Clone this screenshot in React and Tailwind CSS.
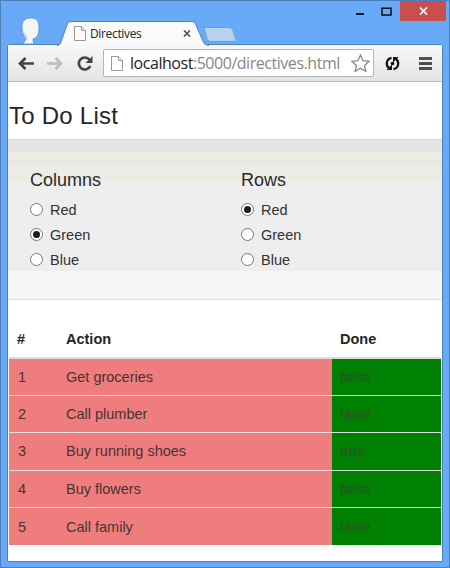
import React from 'react';

const items = [
  ['Get groceries', 'false'],
  ['Call plumber', 'false'],
  ['Buy running shoes', 'true'],
  ['Buy flowers', 'false'],
  ['Call family', 'false'],
];

function PageIcon({ className }) {
  return (
    <svg className={className} viewBox="0 0 12 15" fill="#fff" stroke="#999" strokeWidth="1">
      <path d="M.5.5h7l4 4v10H.5z" />
      <path d="M7.5.5v4h4" fill="#e8e8e8" />
    </svg>
  );
}

function TitleBar() {
  return (
    <div className="relative flex h-11 shrink-0 items-start">
      <svg className="ml-[19px] mt-[16px] h-[28px] w-[23px] shrink-0" viewBox="0 0 23 28">
        <path
          d="M11 1C5 1 2 4 2 9c0 4 0 6 2 9 1 1 2 2 2 4l-3 5h11l-1-3 0-2c4-1 6-5 6-10 0-8-2-11-8-11z"
          fill="#f4f6f8"
          stroke="#5a8cc4"
          strokeWidth=".8"
        />
        <path d="M3.500 8c-1 6 1 9 4 12l-.5 4c-1-2-3.500-6-3.500-10z" fill="#ccd5de" />
      </svg>
      <div className="relative ml-[14px] mt-[20px] flex h-[25px] w-[152px] shrink-0 items-center">
        <svg className="absolute inset-0 h-[25px] w-[152px]" viewBox="0 0 152 25">
          <path
            d="M0 24.5C4 24 4 21 5 18L10 4C11 1 12 .5 15 .5H134C137 .5 138 1 139 4L145 18C147 23 148 24.500 152 24.500"
            fill="#fafafa"
            stroke="#4b82c0"
          />
          <path d="M2 24.500H150" stroke="#f8f8f8" />
        </svg>
        <PageIcon className="relative ml-[17px] h-[15px] w-[12px]" />
        <span className="relative ml-[4px] mt-px w-[93px] font-['Open_Sans','Noto_Sans',sans-serif] text-[12px] tracking-[-0.35px] leading-4 text-[#222]">
          Directives
        </span>
        <svg className="relative h-[7px] w-[8px]" viewBox="0 0 8 7" stroke="#555" strokeWidth="1.7">
          <path d="M1 .5l6 6M7 .5l-6 6" />
        </svg>
      </div>
      <svg className="-ml-[6px] mt-[26px] h-[15px] w-[34px] shrink-0" viewBox="0 0 34 15">
        <path d="M1 .5h25c2 0 3 1 4 3l3 9c0 1 0 2-2 2H9c-3 0-4-1-5-3z" fill="#b6d2ec" stroke="#6d9fce" />
      </svg>
      <div className="ml-auto mr-[3px] flex items-start">
        <svg className="mr-[17px] mt-[12px] h-[2px] w-[8px]" viewBox="0 0 8 2">
          <path d="M0 0h8v2H0z" fill="#111" />
        </svg>
        <svg className="mr-[8px] mt-[6px] h-[9px] w-[11px]" viewBox="0 0 11 9">
          <path d="M1 1.2h9v6.800H1z" fill="none" stroke="#111" strokeWidth="1.5" />
        </svg>
        <div className="flex h-5 w-[46px] items-center justify-center bg-[#c84f4e]">
          <svg className="h-[8px] w-[9px]" viewBox="0 0 9 8" stroke="#fff" strokeWidth="1.7">
            <path d="M1 .5l7 7M8 .5l-7 7" />
          </svg>
        </div>
      </div>
    </div>
  );
}

function Toolbar() {
  return (
    <div className="flex h-[37px] shrink-0 items-center border-b border-[#bdbdbd] bg-linear-to-b from-[#f8f8f8] to-[#e4e4e4]">
      <svg className="ml-[10px] h-[13px] w-[16px]" viewBox="0 0 16 13" fill="none" stroke="#444" strokeWidth="2.7">
        <path d="M7.5 1L2 6.5 7.5 12M2 6.5h14" />
      </svg>
      <svg className="ml-[13px] h-[13px] w-[16px]" viewBox="0 0 16 13" fill="none" stroke="#bbb" strokeWidth="2.5">
        <path d="M8.5 1L14 6.5 8.5 12M14 6.5H0" />
      </svg>
      <svg className="ml-[14px] h-[15px] w-[16px]" viewBox="0 0 16 15" fill="none">
        <path d="M12.5 3.7A6 6 0 1 0 13.3 10" stroke="#444" strokeWidth="2.6" />
        <path d="M15.5 0v7H8.5z" fill="#444" />
      </svg>
      <div className="ml-[10px] flex h-[28px] w-[271px] items-center rounded-[2px] border border-[#b5b5b5] bg-white">
        <PageIcon className="ml-[7px] h-[15px] w-[12px] shrink-0" />
        <span className="ml-[7px] w-[221px] shrink-0 whitespace-nowrap font-['Open_Sans','Noto_Sans',sans-serif] text-[16px] leading-5 tracking-[-0.46px] text-[#888]">
          <span className="text-[#222]">localhost</span>:5000/directives.html
        </span>
        <svg className="h-[18px] w-[19px] shrink-0" viewBox="0 0 19 18" fill="#fff" stroke="#888" strokeWidth="1.3">
          <path d="M9.5 1l2.5 5.7 6.2.6-4.7 4.1 1.4 6-5.4-3.2-5.4 3.2 1.400-6L.8 7.300 7 6.700z" />
        </svg>
      </div>
      <svg className="ml-[11px] h-[15px] w-[15px]" viewBox="0 0 15 15" fill="none" stroke="#111" strokeWidth="2.2">
        <path d="M6.500 1.900C1 3 .5 9.500 4 12M8.500 13.100C14 12 14.500 5.500 11 3" />
        <path d="M1.500 14h5.500V8.500zM13.500 1H8v5.500z" fill="#111" stroke="none" />
        <circle cx="7.500" cy="7.500" r="1.800" fill="#111" stroke="none" />
      </svg>
      <div className="ml-[19px] flex w-[13px] flex-col gap-[2px]">
        <div className="h-[3px] bg-[#505050]" />
        <div className="h-[3px] bg-[#505050]" />
        <div className="h-[3px] bg-[#505050]" />
      </div>
    </div>
  );
}

function Choice({ label, checked }) {
  return (
    <div className="flex h-[25px] items-center">
      <span className="flex size-[13px] items-center justify-center rounded-full border border-[#777] bg-white">
        {checked && <span className="size-[7px] rounded-full bg-[#1c1c1c]" />}
      </span>
      <span className="ml-[7px] text-[14.5px] leading-5">{label}</span>
    </div>
  );
}

function ChoiceGroup({ title, selected }) {
  return (
    <div className="w-[211px] shrink-0">
      <h4 className="text-[18px] leading-5 text-[#2b2b2b]">{title}</h4>
      <div className="mt-[7px]">
        {['Red', 'Green', 'Blue'].map((c) => (
          <Choice key={c} label={c} checked={c === selected} />
        ))}
      </div>
    </div>
  );
}

export default function App() {
  return (
    <div className="flex h-[568px] w-[450px] flex-col border border-[#4c80bc] bg-[#68aaf7] font-['Liberation_Sans',Arial,sans-serif] text-[#333]">
      <TitleBar />
      <div className="-mt-px mx-[6px] mb-[5px] flex flex-1 flex-col rounded-t-[3px] border border-[#4b80bd] bg-white">
        <Toolbar />
        <h3 className="flex h-[57px] items-center pl-px pt-[10px] text-[24px] leading-7 tracking-[0.25px] text-[#252525]">To Do List</h3>
        <div className="flex h-[161px] flex-col overflow-hidden border-y border-[#dcdcdc] bg-[#eee]">
          <div className="h-3 shrink-0 bg-[#e5e5e5]" />
          <div className="h-2 shrink-0 bg-[#ecece4]" />
          <div className="h-1 shrink-0 bg-[#e6e6e6]" />
          <div className="flex h-[107px] shrink-0 bg-linear-to-b from-[#ecece5] from-15% to-[#eee] to-16% pl-[22px] pt-[6px]">
            <ChoiceGroup title="Columns" selected="Green" />
            <ChoiceGroup title="Rows" selected="Red" />
          </div>
          <div className="flex-1 bg-[#f6f6f6]" />
        </div>
        <table className="ml-[1px] mt-[20px] w-[432px] table-fixed border-collapse text-left text-[14.5px] leading-5">
          <colgroup>
            <col className="w-[48px]" />
            <col className="w-[275px]" />
            <col />
          </colgroup>
          <thead>
            <tr className="h-[38px] border-b-2 border-[#ddd] text-[#252525]">
              <th className="px-2">#</th>
              <th className="pl-[9px]">Action</th>
              <th className="px-2">Done</th>
            </tr>
          </thead>
          <tbody>
            {items.map(([action, done], i) => (
              <tr key={action} className="h-[37.4px] border-t border-[#ddd] bg-[#f07d7d] text-[#463434]">
                <td className="pl-[9px]">{i + 1}</td>
                <td className="pl-[9px]">{action}</td>
                <td className="bg-[#008000] px-2 text-[#2c512c]">{done}</td>
              </tr>
            ))}
          </tbody>
        </table>
      </div>
    </div>
  );
}
